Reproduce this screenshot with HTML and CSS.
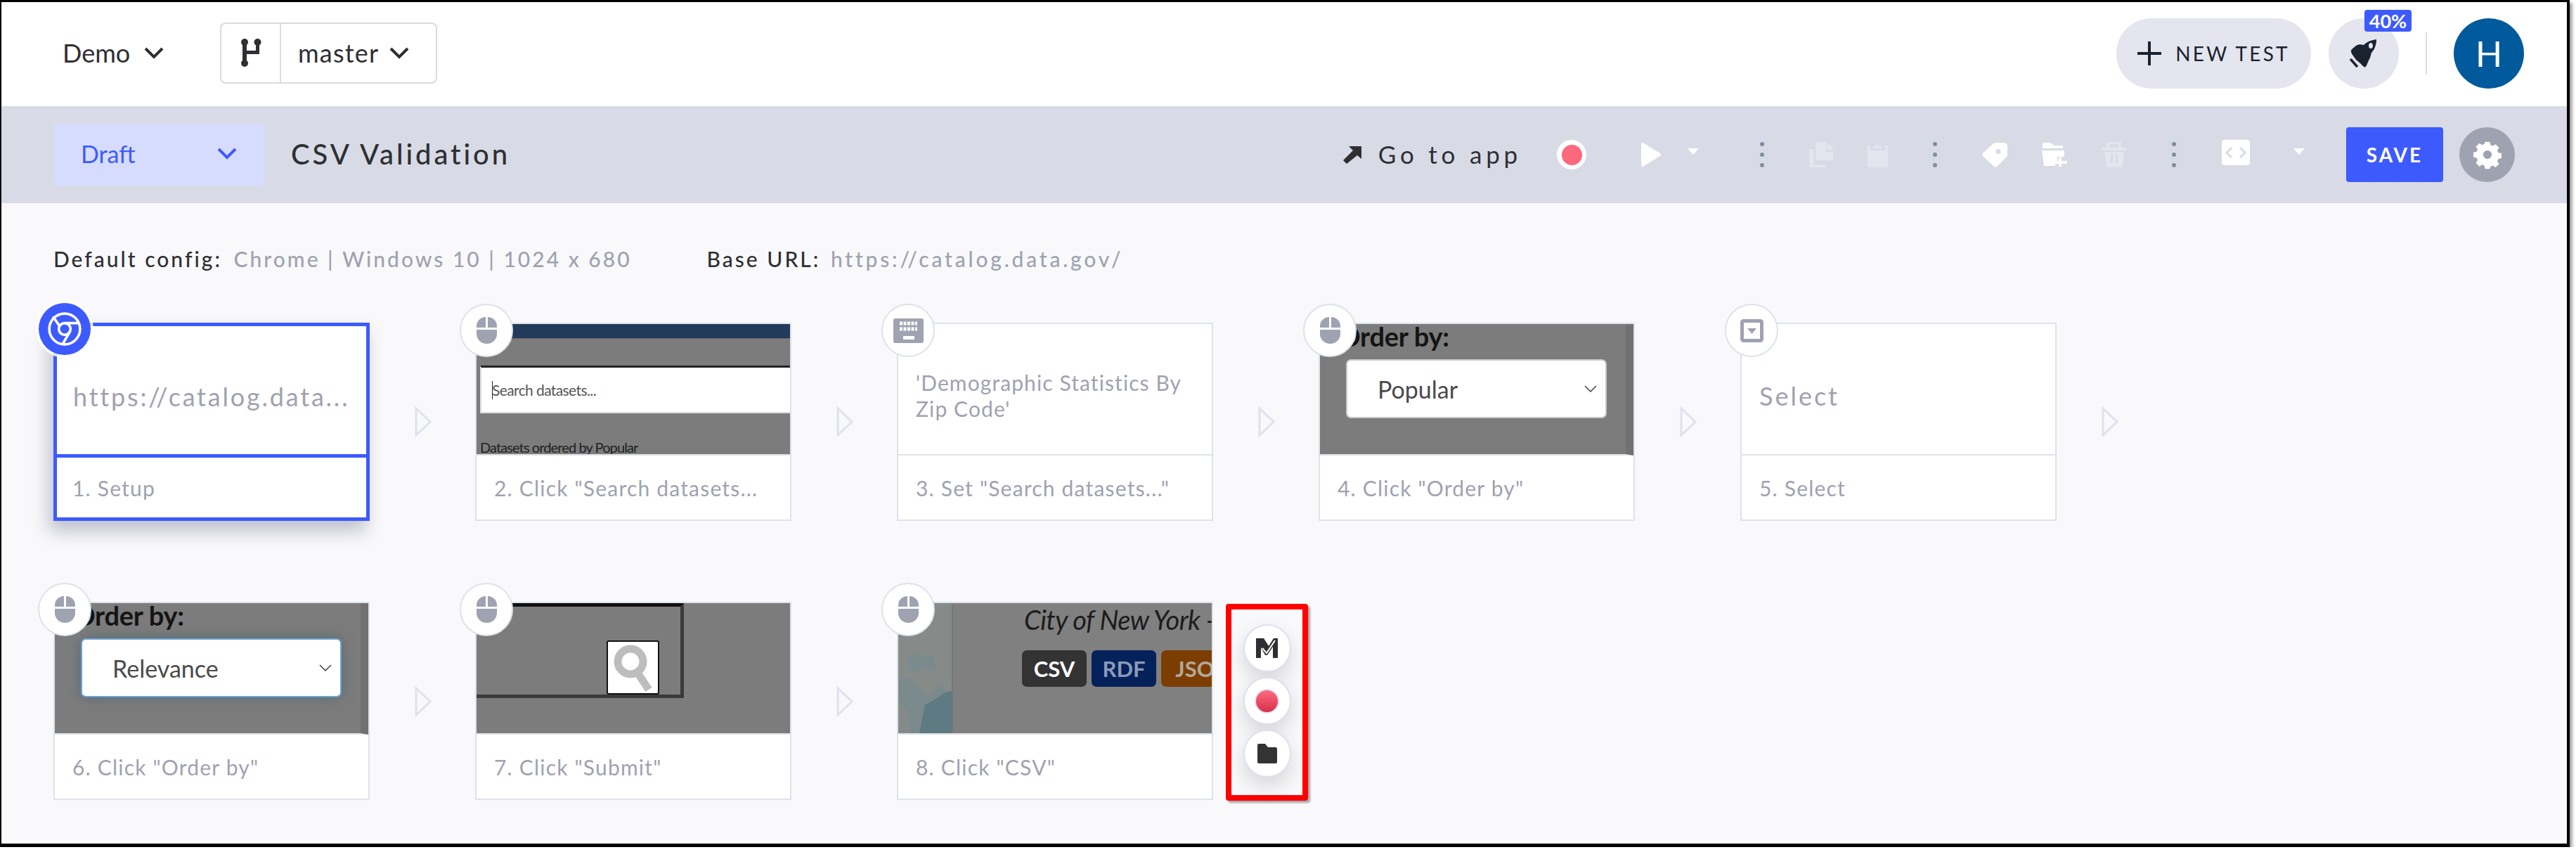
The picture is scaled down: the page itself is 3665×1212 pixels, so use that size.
FILE: index.html
```html
<!DOCTYPE html>
<html lang="en">
<head>
  <meta charset="UTF-8" />
  <title>CSV Validation</title>
  <link rel="stylesheet" href="styles.css">
</head>
<body>
  <div class="frame">
    <div class="top_menu">
      <div class="project">Demo
        <svg class="chevron" viewBox="0 0 30 18"><path d="M3 3l12 12L27 3" /></svg>
      </div>
      <div class="branch">
        <div class="branch_icon">
          <svg viewBox="0 0 30 42" width="30" height="42"><g fill="#2f2f33"><rect x="3" y="4" width="6" height="34" /><rect x="22" y="4" width="5" height="18" /><rect x="3" y="18" width="24" height="5" /><circle cx="6" cy="6" r="5" /><circle cx="24.500" cy="6" r="5" /><circle cx="6" cy="36" r="5" /></g></svg>
        </div>
        <div class="branch_name">master
          <svg class="chevron" viewBox="0 0 30 18"><path d="M3 3l12 12L27 3" /></svg>
        </div>
      </div>
      <div class="top_right">
        <button class="new_test">
          <svg viewBox="0 0 34 34" width="34" height="34"><path d="M17 0v34M0 17h34" stroke="#1a2230" stroke-width="4" /></svg>
          NEW TEST
        </button>
        <div class="rocket">
          <svg viewBox="0 0 40 40" width="40" height="40"><path fill="#1a2230" fill-rule="evenodd" d="M38 0C31 1 25 3 20 8c-4-1-8-1-11 1L3 14c-2 3-1 5 1 8l5 7c2 2 4 3 6 5l5 5c2 1 3 0 4-2l3-7c2-3 3-7 4-11 5-5 7-12 7-19 0 0 1-1 0 0zM30 5c2 0 3 2 3 4s-1 4-3 4-3-2-3-4 1-4 3-4z" /><path d="M2 29l8 9" stroke="#1a2230" stroke-width="3.5" stroke-linecap="round" /></svg>
          <span class="rocket_badge">40%</span>
        </div>
        <div class="top_divider"></div>
        <div class="avatar">H</div>
      </div>
    </div>

    <div class="test_bar">
      <div class="status">Draft
        <svg class="chevron" viewBox="0 0 30 18"><path d="M3 3l12 12L27 3" /></svg>
      </div>
      <div class="test_title">CSV Validation</div>
      <div class="toolbar">
        <svg class="tool_goto" viewBox="0 0 29 26" width="29" height="26"><path fill="#2f2f33" d="M10 1h18v18l-6-5L7 26l-5-5 14-14z" /></svg>
        <span class="goto_text">Go to app</span>
        <span class="tool_record"><span class="record_dot"></span></span>
        <svg class="tool_play" viewBox="0 0 28 34" width="28" height="34"><path fill="#fff" stroke="#fff" stroke-width="4" stroke-linejoin="round" d="M2 2v30l24-15z" /></svg>
        <svg class="tool_caret" viewBox="0 0 16 9" width="16" height="9"><path fill="#fff" d="M0 0h16L8 9z" /></svg>
        <span class="tool_dots"><i></i><i></i><i></i></span>
        <svg class="tool_copy" viewBox="0 0 34 36" width="34" height="36"><path fill="#e4e5ee" d="M9 0h15v14h11v12H9zM26 1l9 10h-9zM0 10h6v23h18v3H0z" /></svg>
        <svg class="tool_paste" viewBox="0 0 29 36" width="29" height="36"><path fill="#e4e5ee" d="M0 5h4v7h21V5h4v31H0zM8 9V6h3l3-4 3 4h4v3z" /></svg>
        <span class="tool_dots gap_a"><i></i><i></i><i></i></span>
        <svg class="tool_tag" viewBox="0 0 36 36" width="36" height="36"><path fill="#fff" fill-rule="evenodd" d="M19 1h13c2 0 4 2 4 4v13c0 2-1 3-2 4L21 35c-1 1-3 1-4 0L1 20c-1-1-1-3 0-4L15 3c1-1 2-2 4-2zm4 9a3.500 3.500 0 1 0 0 7 3.500 3.500 0 0 0 0-7z" /></svg>
        <svg class="tool_folder" viewBox="0 0 36 34" width="36" height="34"><path fill="#fff" d="M1 2c0-1 1-2 2-2h9l5 4h13v4H1zM0 11h32v9H22v7h-3v6H3z" /><path fill="#fff" d="M24 21h4v5h8v4h-8v4h-4v-4h-7v-4h7z" /></svg>
        <svg class="tool_trash" viewBox="0 0 36 36" width="36" height="36"><path fill="#e4e5ee" fill-rule="evenodd" d="M8 0h20v8h7v4H1V8h7zm4 3v5h12V3zM4 14h28l-3 22H7zm9 3v13h3V17zm7 0v13h3V17z" /></svg>
        <span class="tool_dots gap_b"><i></i><i></i><i></i></span>
        <span class="tool_code"><svg viewBox="0 0 30 16" width="30" height="16"><path d="M9 1L2 8l7 7M21 1l7 7-7 7" fill="none" stroke="#d8dbe6" stroke-width="3" /></svg></span>
        <svg class="tool_caret gap_c" viewBox="0 0 16 9" width="16" height="9"><path fill="#fff" d="M0 0h16L8 9z" /></svg>
        <button class="save">SAVE</button>
        <span class="settings">
          <svg viewBox="0 0 24 24" width="42" height="42"><path fill="#fff" fill-rule="evenodd" d="M10 2h4l.5 2.600 1.800.8L18.600 4l2.800 2.800-1.400 2.300.8 1.800 2.600.5v4l-2.600.5-.8 1.800 1.400 2.300-2.800 2.800-2.300-1.400-1.800.8L14 24h-4l-.5-2.600-1.800-.8L5.400 22l-2.800-2.800L4 16.900l-.8-1.800L.6 14.600v-4l2.600-.5.8-1.800L2.600 6 5.400 3.200l2.300 1.400 1.800-.8zM12 9a3.500 3.500 0 1 0 0 7 3.500 3.500 0 0 0 0-7z" transform="translate(0 -.5)" /></svg>
        </span>
      </div>
    </div>

    <div class="content">
      <div class="config">
        <div class="config_item">Default config: <span class="config_value">Chrome | Windows 10 | 1024 x 680</span></div>
        <div class="config_item">Base URL: <span class="config_value config_url">https://catalog.data.gov/</span></div>
      </div>

      <div class="step_row">
        <div class="step">
          <div class="card card_active">
            <span class="step_icon step_icon_active">
              <svg viewBox="0 0 48 48" width="50" height="50" fill="none" stroke="#fff" stroke-width="3.500"><circle cx="24" cy="24" r="21" /><circle cx="24" cy="24" r="8" /><path d="M24 16h19M17 20L8 7M31 28L21 45" /></svg>
            </span>
            <div class="card_body card_text url_text">https://catalog.data...</div>
            <div class="card_label">1. Setup</div>
          </div>
          <div class="step_arrow"><svg viewBox="0 0 24 44" width="24" height="44"><path d="M2 3v38l20-19z" fill="none" stroke="#dfe2ec" stroke-width="3" /></svg></div>
        </div>

        <div class="step">
          <div class="card">
            <span class="step_icon"><svg class="mouse" viewBox="0 0 29 38" width="29" height="38"><path d="M13 0A13 13 0 0 0 0 13v2h13zM16 0a13 13 0 0 1 13 13v2H16zM0 18h29v6a14.500 14 0 0 1-29 0z" /></svg></span>
            <div class="card_body thumb thumb_search">
              <div class="site_nav"></div>
              <div class="site_input"><span class="caret_line"></span>Search datasets...</div>
              <div class="site_note">Datasets ordered by Popular</div>
            </div>
            <div class="card_label">2. Click "Search datasets...</div>
          </div>
          <div class="step_arrow"><svg viewBox="0 0 24 44" width="24" height="44"><path d="M2 3v38l20-19z" fill="none" stroke="#dfe2ec" stroke-width="3" /></svg></div>
        </div>

        <div class="step">
          <div class="card">
            <span class="step_icon">
              <svg viewBox="0 0 43 35" width="43" height="35"><rect width="43" height="35" rx="3" fill="#9fa2b0" /><path d="M9 7h25M9 15h25" stroke="#fff" stroke-width="5" stroke-dasharray="4 1.500" /><rect x="14" y="25" width="16" height="5" fill="#fff" /></svg>
            </span>
            <div class="card_body card_text set_text">'Demographic Statistics By Zip Code'</div>
            <div class="card_label">3. Set "Search datasets..."</div>
          </div>
          <div class="step_arrow"><svg viewBox="0 0 24 44" width="24" height="44"><path d="M2 3v38l20-19z" fill="none" stroke="#dfe2ec" stroke-width="3" /></svg></div>
        </div>

        <div class="step">
          <div class="card">
            <span class="step_icon"><svg class="mouse" viewBox="0 0 29 38" width="29" height="38"><path d="M13 0A13 13 0 0 0 0 13v2h13zM16 0a13 13 0 0 1 13 13v2H16zM0 18h29v6a14.500 14 0 0 1-29 0z" /></svg></span>
            <div class="card_body thumb thumb_order">
              <div class="order_title">Order by:</div>
              <div class="order_select">Popular
                <svg viewBox="0 0 18 10" width="18" height="10"><path d="M1 1l8 8 8-8" fill="none" stroke="#444" stroke-width="1.500" /></svg>
              </div>
            </div>
            <div class="card_label">4. Click "Order by"</div>
          </div>
          <div class="step_arrow"><svg viewBox="0 0 24 44" width="24" height="44"><path d="M2 3v38l20-19z" fill="none" stroke="#dfe2ec" stroke-width="3" /></svg></div>
        </div>

        <div class="step">
          <div class="card">
            <span class="step_icon">
              <svg viewBox="0 0 33 33" width="33" height="33"><rect x="2.500" y="2.500" width="28" height="28" rx="2" fill="none" stroke="#9fa2b0" stroke-width="5" /><path d="M10 13h13l-6.500 8z" fill="#9fa2b0" /></svg>
            </span>
            <div class="card_body card_text select_text">Select</div>
            <div class="card_label">5. Select</div>
          </div>
          <div class="step_arrow"><svg viewBox="0 0 24 44" width="24" height="44"><path d="M2 3v38l20-19z" fill="none" stroke="#dfe2ec" stroke-width="3" /></svg></div>
        </div>
      </div>

      <div class="step_row">
        <div class="step">
          <div class="card">
            <span class="step_icon"><svg class="mouse" viewBox="0 0 29 38" width="29" height="38"><path d="M13 0A13 13 0 0 0 0 13v2h13zM16 0a13 13 0 0 1 13 13v2H16zM0 18h29v6a14.500 14 0 0 1-29 0z" /></svg></span>
            <div class="card_body thumb thumb_order">
              <div class="order_title">Order by:</div>
              <div class="order_select order_focus">Relevance
                <svg viewBox="0 0 18 10" width="18" height="10"><path d="M1 1l8 8 8-8" fill="none" stroke="#444" stroke-width="1.500" /></svg>
              </div>
            </div>
            <div class="card_label">6. Click "Order by"</div>
          </div>
          <div class="step_arrow"><svg viewBox="0 0 24 44" width="24" height="44"><path d="M2 3v38l20-19z" fill="none" stroke="#dfe2ec" stroke-width="3" /></svg></div>
        </div>

        <div class="step">
          <div class="card">
            <span class="step_icon"><svg class="mouse" viewBox="0 0 29 38" width="29" height="38"><path d="M13 0A13 13 0 0 0 0 13v2h13zM16 0a13 13 0 0 1 13 13v2H16zM0 18h29v6a14.500 14 0 0 1-29 0z" /></svg></span>
            <div class="card_body thumb">
              <div class="submit_box">
                <div class="submit_btn">
                  <svg viewBox="0 0 60 70" width="60" height="70"><circle cx="26" cy="26" r="18" fill="none" stroke="#bdbdbd" stroke-width="11" /><path d="M36 42l16 24" stroke="#bdbdbd" stroke-width="11" /></svg>
                </div>
              </div>
            </div>
            <div class="card_label">7. Click "Submit"</div>
          </div>
          <div class="step_arrow"><svg viewBox="0 0 24 44" width="24" height="44"><path d="M2 3v38l20-19z" fill="none" stroke="#dfe2ec" stroke-width="3" /></svg></div>
        </div>

        <div class="step">
          <div class="card">
            <span class="step_icon"><svg class="mouse" viewBox="0 0 29 38" width="29" height="38"><path d="M13 0A13 13 0 0 0 0 13v2h13zM16 0a13 13 0 0 1 13 13v2H16zM0 18h29v6a14.500 14 0 0 1-29 0z" /></svg></span>
            <div class="card_body thumb thumb_dataset">
              <div class="site_map">
                <svg viewBox="0 0 76 185" width="76" height="185"><path fill="#7b8a8c" d="M14 75l14-6 8 8 14-4 4 20-12 4-8-8-10 10-10-8zM0 110l16-4 16 16 10 14 16-18 8-4v71H18l-4-30-14-20z" /><path fill="#5e7a83" d="M30 185l8-40 14-8 14-10 10-2v60z" /></svg>
              </div>
              <div class="site_dataset">
                <div class="dataset_org">City of New York -</div>
                <div class="format_row">
                  <span class="format format_csv">CSV</span>
                  <span class="format format_rdf">RDF</span>
                  <span class="format format_json">JSON</span>
                </div>
              </div>
            </div>
            <div class="card_label">8. Click "CSV"</div>
          </div>
        </div>

        <div class="add_box">
          <span class="add_btn">
            <svg viewBox="0 0 31 28" width="31" height="28"><path fill="#2f2f33" d="M0 0h11l7 11L25 0h6v28h-7V12l-8 12h-3L7 13v15H0z" /><path d="M9 14l6 7L27 3" fill="none" stroke="#fff" stroke-width="2" /></svg>
          </span>
          <span class="add_btn"><span class="add_record"></span></span>
          <span class="add_btn">
            <svg viewBox="0 0 28 28" width="28" height="28"><path fill="#333" d="M0 2c0-1 1-2 2-2h9l4 5h11c1 0 2 1 2 2v19c0 1-1 2-2 2H2c-1 0-2-1-2-2z" /></svg>
          </span>
        </div>
      </div>
    </div>
  </div>
</body>
</html>
```

FILE: styles.css
```css
body {
  margin: 0;
  background: #fff;
  font-family: Lato, "Open Sans", sans-serif;
  color: #2f2f33;
}
button {
  font-family: inherit;
  border: none;
}
.frame {
  box-sizing: border-box;
  width: 3656px;
  height: 1205px;
  border-style: solid;
  border-color: #000;
  border-width: 3px 4px 5px 2px;
  background: #f9f9fb;
  box-shadow: 3px 4px 5px rgba(0, 0, 0, 0.45);
}
.chevron {
  width: 30px;
  height: 18px;
  flex: none;
  fill: none;
  stroke: #2f2f33;
  stroke-width: 4;
}

/* top menu */
.top_menu {
  box-sizing: border-box;
  height: 148px;
  padding: 0 61px 4px 87px;
  background: #fff;
  display: flex;
  align-items: center;
  font-size: 36px;
}
.project {
  display: flex;
  align-items: center;
  gap: 19px;
  width: 224px;
}
.branch {
  box-sizing: border-box;
  width: 309px;
  height: 87px;
  border: 2px solid #d8dbe6;
  border-radius: 8px;
  display: flex;
}
.branch_icon {
  width: 83px;
  border-right: 2px solid #d8dbe6;
  display: flex;
  align-items: center;
  justify-content: center;
}
.branch_name {
  flex: 1;
  padding-left: 24px;
  letter-spacing: 1.2px;
  display: flex;
  align-items: center;
  gap: 14px;
}
.top_right {
  margin-left: auto;
  margin-top: 2px;
  display: flex;
  align-items: center;
}
.new_test {
  width: 277px;
  height: 100px;
  border-radius: 50px;
  background: #e4e5ee;
  color: #1a2230;
  font-size: 28px;
  letter-spacing: 3.2px;
  display: flex;
  align-items: center;
  justify-content: center;
  gap: 20px;
}
.rocket {
  width: 100px;
  height: 100px;
  margin-left: 25px;
  border-radius: 50%;
  background: #e4e5ee;
  display: flex;
  align-items: center;
  justify-content: center;
  position: relative;
}
.rocket_badge {
  position: absolute;
  top: -12px;
  left: 51px;
  width: 67px;
  height: 31px;
  border-radius: 4px;
  background: #3d5afe;
  color: #fff;
  font-size: 27px;
  font-weight: 700;
  line-height: 31px;
  text-align: center;
}
.top_divider {
  width: 2px;
  height: 60px;
  margin: 0 38px;
  background: #dcdde4;
}
.avatar {
  width: 100px;
  height: 100px;
  border-radius: 50%;
  background: #005a9c;
  color: #fff;
  font-size: 50px;
  line-height: 100px;
  text-align: center;
}

/* test bar */
.test_bar {
  box-sizing: border-box;
  height: 138px;
  padding: 0 74px;
  background: #d8dbe6;
  display: flex;
  align-items: center;
}
.status {
  box-sizing: border-box;
  width: 300px;
  height: 88px;
  padding: 0 38px 4px 39px;
  border-radius: 6px;
  background: #d6dcfe;
  color: #3d5afe;
  font-size: 34px;
  display: flex;
  align-items: center;
  justify-content: space-between;
}
.status .chevron {
  stroke: #3d5afe;
}
.test_title {
  margin-left: 38px;
  margin-bottom: 3px;
  font-size: 40px;
  font-weight: 500;
  letter-spacing: 3.9px;
}
.toolbar {
  margin-left: auto;
  display: flex;
  align-items: center;
}
.goto_text {
  margin-left: 23px;
  margin-bottom: 3px;
  font-size: 35px;
  letter-spacing: 5.8px;
}
.tool_record {
  box-sizing: border-box;
  width: 42px;
  height: 42px;
  margin-left: 50px;
  border-radius: 50%;
  background: #fff;
  display: flex;
  align-items: center;
  justify-content: center;
}
.record_dot {
  width: 29px;
  height: 29px;
  border-radius: 50%;
  background: #fc687c;
}
.tool_play { margin-left: 78px; }
.tool_caret { margin-left: 38px; margin-bottom: 9px; }
.tool_dots {
  width: 6px;
  margin-left: 87px;
  display: flex;
  flex-direction: column;
  gap: 9px;
}
.tool_dots i {
  width: 6px;
  height: 6px;
  border-radius: 50%;
  background: #7f8fa0;
}
.tool_copy { margin-left: 64px; }
.tool_paste { margin-left: 49px; }
.gap_a { margin-left: 64px; }
.tool_tag { margin-left: 64px; }
.tool_folder { margin-left: 49px; }
.tool_trash { margin-left: 49px; }
.gap_b { margin-left: 64px; }
.tool_code {
  width: 40px;
  height: 36px;
  margin-left: 65px;
  margin-bottom: 6px;
  border-radius: 4px;
  background: #fff;
  display: flex;
  align-items: center;
  justify-content: center;
}
.gap_c { margin-left: 62px; }
.save {
  width: 138px;
  height: 78px;
  margin-left: 59px;
  border-radius: 4px;
  background: #3d5afe;
  color: #fff;
  font-size: 28px;
  font-weight: 700;
  letter-spacing: 3px;
}
.settings {
  width: 79px;
  height: 78px;
  margin-left: 23px;
  border-radius: 50%;
  background: #9fa2b0;
  display: flex;
  align-items: center;
  justify-content: center;
}

/* steps */
.content {
  padding: 61px 0 0 74px;
}
.config {
  height: 36px;
  margin-bottom: 73px;
  display: flex;
  gap: 107px;
  font-size: 30px;
  line-height: 36px;
  font-weight: 500;
  letter-spacing: 3px;
  white-space: nowrap;
}
.config_value {
  color: #9fa2b0;
  margin-left: 6px;
}
.config_url {
  margin-left: 4px;
  letter-spacing: 3.8px;
}
.step_row {
  display: flex;
  margin-bottom: 115px;
}
.step {
  display: flex;
}
.card {
  box-sizing: border-box;
  width: 450px;
  height: 282px;
  border: 2px solid #dce3ea;
  background: #fff;
  display: flex;
  flex-direction: column;
  position: relative;
}
.card_active {
  border: 5px solid #3d5afe;
  box-shadow: -6px 14px 24px rgba(60, 70, 100, 0.32);
}
.card_body {
  box-sizing: content-box;
  height: 185px;
  border-bottom: 2px solid #dce3ea;
  flex: none;
}
.card_active .card_body {
  height: 182px;
  border-bottom: 5px solid #3d5afe;
}
.card_label {
  flex: 1;
  padding-left: 25px;
  display: flex;
  align-items: center;
  color: #9fa2b0;
  font-size: 30px;
  letter-spacing: 1.2px;
  white-space: nowrap;
}
.card_active .card_label {
  padding-left: 22px;
}
.card_text {
  box-sizing: border-box;
  height: 187px;
  padding: 18px 10px 0 25px;
  display: flex;
  align-items: center;
  color: #9fa2b0;
}
.card_active .card_text {
  height: 187px;
}
.url_text {
  padding-left: 23px;
  font-size: 36px;
  letter-spacing: 2.8px;
  white-space: nowrap;
}
.set_text {
  padding-right: 40px;
  font-size: 30px;
  line-height: 37px;
  letter-spacing: 1.1px;
}
.select_text {
  font-size: 36px;
  letter-spacing: 3px;
}
.step_icon {
  box-sizing: border-box;
  position: absolute;
  top: -29px;
  left: -24px;
  width: 76px;
  height: 76px;
  border: 2px solid #dce3ea;
  border-radius: 50%;
  background: #fff;
  display: flex;
  align-items: center;
  justify-content: center;
  z-index: 2;
}
.step_icon_active {
  top: -33px;
  left: -26px;
  width: 74px;
  height: 74px;
  border: none;
  background: #3d5afe;
  box-shadow: 0 0 0 4px rgba(255, 255, 255, 0.85);
}
.mouse {
  fill: #9fa2b0;
}
.step_arrow {
  box-sizing: border-box;
  width: 150px;
  padding-left: 1px;
  display: flex;
  align-items: center;
  justify-content: center;
}

/* thumbnails */
.thumb {
  background: #7c7c7c;
  overflow: hidden;
  display: flex;
  flex-direction: column;
}
.thumb_search {
  color: #222;
}
.site_nav {
  height: 20px;
  flex: none;
  background: #233a5a;
  border-bottom: 1px solid #666;
}
.site_input {
  box-sizing: border-box;
  height: 68px;
  width: 460px;
  flex: none;
  margin: 38px 0 0 5px;
  padding-left: 15px;
  border: 2px solid #ddd;
  border-top: 3px solid #222;
  background: #fff;
  color: #555;
  font-size: 21px;
  letter-spacing: -0.6px;
  display: flex;
  align-items: center;
}
.caret_line {
  width: 1px;
  height: 26px;
  margin-right: -1px;
  background: #222;
}
.site_note {
  margin: auto 0 0 5px;
  height: 20px;
  font-size: 20px;
  line-height: 20px;
  letter-spacing: -0.9px;
  white-space: nowrap;
}
.thumb_order {
  box-sizing: border-box;
  height: 187px;
  padding-left: 37px;
  border-right: 11px solid #717171;
}
.card .thumb_order {
  border-bottom: 2px solid #dce3ea;
}
.order_title {
  height: 50px;
  flex: none;
  margin-left: -10px;
  font-size: 38px;
  line-height: 34px;
  font-weight: 700;
  letter-spacing: -0.3px;
  color: #141414;
}
.order_select {
  box-sizing: border-box;
  width: 371px;
  height: 84px;
  padding: 0 12px 0 43px;
  border: 2px solid #c9c9c9;
  border-radius: 7px;
  background: #fff;
  color: #4a4a4a;
  font-size: 34px;
  display: flex;
  align-items: center;
  justify-content: space-between;
}
.order_focus {
  border-color: #6ba5cf;
  box-shadow: 0 0 18px rgba(60, 90, 115, 0.55);
}
.submit_box {
  box-sizing: border-box;
  width: 295px;
  height: 135px;
  padding-right: 30px;
  border-top: 5px solid #111;
  border-right: 5px solid #3a3a3a;
  border-bottom: 5px solid #3a3a3a;
  display: flex;
  align-items: flex-end;
  justify-content: flex-end;
}
.submit_btn {
  box-sizing: border-box;
  width: 75px;
  height: 77px;
  border: 2px solid #111;
  border-radius: 3px;
  background: #fff;
  display: flex;
  align-items: center;
  justify-content: center;
}
.thumb_dataset {
  flex-direction: row;
  background: #808080;
}
.site_map {
  width: 76px;
  flex: none;
  background: #868a88;
  border-right: 2px solid #777;
}
.site_dataset {
  padding-left: 98px;
  flex: 1;
  min-width: 0;
  overflow: hidden;
}
.dataset_org {
  height: 67px;
  padding-left: 3px;
  font-size: 38px;
  line-height: 46px;
  font-style: italic;
  letter-spacing: -0.6px;
  color: #1c1c1c;
  white-space: nowrap;
}
.format_row {
  display: flex;
  gap: 7px;
}
.format {
  flex: none;
  height: 52px;
  width: 92px;
  border-radius: 7px;
  font-size: 31px;
  font-weight: 700;
  line-height: 52px;
  text-align: center;
}
.format_csv {
  background: #333;
  color: #fff;
}
.format_rdf {
  background: #05215a;
  color: #8a9bb8;
}
.format_json {
  width: 120px;
  background: #7c3d00;
  color: #b3a89a;
}

/* red box with the add buttons */
.add_box {
  box-sizing: border-box;
  width: 117px;
  height: 280px;
  margin: 3px 0 0 18px;
  padding-bottom: 4px;
  border: 8px solid #f00;
  border-radius: 4px;
  box-shadow: 3px 3px 3px rgba(0, 0, 0, 0.35);
  display: flex;
  flex-direction: column;
  align-items: center;
  justify-content: center;
  gap: 7px;
}
.add_btn {
  box-sizing: border-box;
  width: 68px;
  height: 68px;
  border: 2px solid #dde0ee;
  border-radius: 50%;
  background: #fff;
  box-shadow: 0 12px 28px rgba(0, 0, 0, 0.14);
  display: flex;
  align-items: center;
  justify-content: center;
}
.add_record {
  box-sizing: content-box;
  width: 31px;
  height: 31px;
  border: 2px solid #dde0ee;
  border-radius: 50%;
  background: linear-gradient(#ff6b80, #d6304a);
}
```
